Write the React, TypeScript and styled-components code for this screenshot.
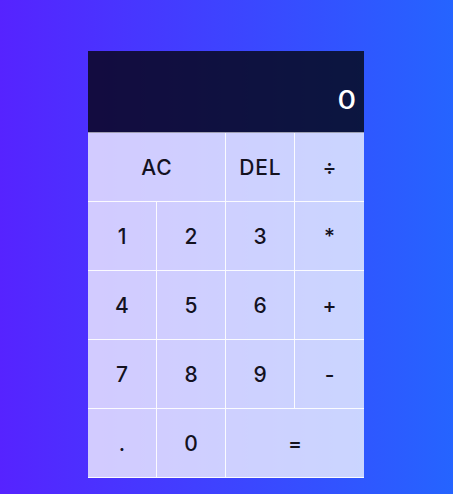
import React, { useState } from "react";
import styled, { createGlobalStyle } from "styled-components";

const GlobalStyle = createGlobalStyle`
  * {
    box-sizing: border-box;
  }
  html, body {
    margin: 0;
    padding: 0;
    height: 100%;
  }
  body {
    background: linear-gradient(to right, #5623ff, #2564ff);
    font-family: "Inter", "Liberation Sans", sans-serif;
  }
`;

type Key = { label: string; span?: boolean; edge?: boolean };

const KEYS: Key[] = [
  { label: "AC", span: true },
  { label: "DEL" },
  { label: "÷", edge: true },
  { label: "1" },
  { label: "2" },
  { label: "3" },
  { label: "*", edge: true },
  { label: "4" },
  { label: "5" },
  { label: "6" },
  { label: "+", edge: true },
  { label: "7" },
  { label: "8" },
  { label: "9" },
  { label: "-", edge: true },
  { label: "." },
  { label: "0" },
  { label: "=", span: true, edge: true },
];

function App() {
  const [value, setValue] = useState("0");

  const press = (label: string) => {
    if (label === "AC") {
      setValue("0");
    } else if (label === "DEL") {
      setValue((v) => (v.length > 1 ? v.slice(0, -1) : "0"));
    } else if (label === "=") {
      // no real evaluation, just keep what's shown
    } else {
      setValue((v) => (v === "0" && label !== "." ? label : v + label));
    }
  };

  return (
    <Page>
      <GlobalStyle />
      <Calculator>
        <Display>
          <Current>{value}</Current>
        </Display>
        {KEYS.map((k) => (
          <CalcButton
            key={k.label}
            $span={k.span}
            $edge={k.edge}
            onClick={() => press(k.label)}
          >
            {k.label}
          </CalcButton>
        ))}
      </Calculator>
    </Page>
  );
}

const Page = styled.div`
  min-height: 100vh;
  display: flex;
  justify-content: center;
  align-items: flex-start;
  padding-top: 51px;
  padding-right: 1px;
`;

const Calculator = styled.div`
  display: grid;
  grid-template-columns: 69px 69px 69px 69px;
  grid-template-rows: 82px repeat(5, 69px);
`;

const Display = styled.div`
  grid-column: 1 / -1;
  background-color: rgba(0, 0, 0, 0.75);
  display: flex;
  justify-content: flex-end;
  align-items: flex-end;
  padding: 0 8px 19px 10px;
  border-bottom: 1px solid rgba(255, 255, 255, 0.6);
`;

const Current = styled.div`
  color: #ffffff;
  font-size: 25px;
  font-weight: 500;
  line-height: 1;
  transform: scaleX(1.15);
  transform-origin: right center;
`;

const CalcButton = styled.button<{ $span?: boolean; $edge?: boolean }>`
  grid-column: ${(p) => (p.$span ? "span 2" : "auto")};
  background-color: rgba(255, 255, 255, 0.75);
  border: none;
  border-right: ${(p) => (p.$edge ? "none" : "1px solid rgba(255, 255, 255, 0.9)")};
  border-bottom: 1px solid rgba(255, 255, 255, 0.9);
  color: #14121f;
  font-family: "Inter", "Liberation Sans", sans-serif;
  font-size: 21px;
  font-weight: 500;
  letter-spacing: 0.8px;
  text-indent: 0.8px;
  cursor: pointer;
  padding: 0;
  outline: none;

  &:hover {
    background-color: rgba(255, 255, 255, 0.9);
  }
`;

export default App;
